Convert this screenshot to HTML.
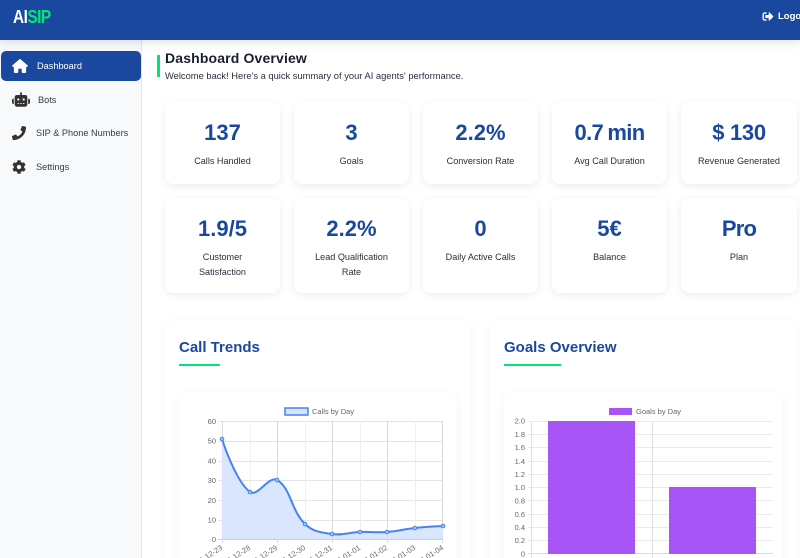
<!DOCTYPE html>
<html><head><meta charset="utf-8"><style>
html,body{margin:0;padding:0;width:800px;height:558px;overflow:hidden;background:#fff;font-family:"Liberation Sans",sans-serif}
*{box-sizing:border-box}
#root{position:relative;width:800px;height:558px;overflow:hidden;background:#fff}
.a{position:absolute}
#hd{left:0;top:0;width:800px;height:40px;background:#1a489f;box-shadow:0 2px 10px rgba(0,0,0,.12);z-index:5}
#sb{left:0;top:40px;width:142px;height:518px;background:#f8f9fb;border-right:1px solid #e5e7eb}
.nav{font-size:9.2px;color:#333b48;white-space:nowrap}
.card{background:#fff;border-radius:8px;box-shadow:0 2px 8px rgba(0,0,0,.08);text-align:center}
.v{position:absolute;left:0;right:0;top:18px;font-size:22px;line-height:26px;font-weight:bold;color:#1a489f}
.l{position:absolute;left:0;right:0;top:52px;font-size:9.1px;line-height:15px;color:#28303c;white-space:nowrap}
.big{background:#fff;border-radius:8px;box-shadow:0 2px 10px rgba(0,0,0,.05)}
.t{font-size:15px;font-weight:bold;color:#1a489f;white-space:nowrap}
.u{height:1.5px;width:41px;background:#00e676}
</style></head><body><div id="root">
<div class="a" id="hd">
<div class="a" style="left:13px;top:7px;font-size:18.5px;line-height:19px;font-weight:bold;letter-spacing:-.6px;color:#fff;transform:scaleX(.83);transform-origin:0 0;white-space:nowrap">AI<span style="color:#00e676">SIP</span></div>
<svg class="a" style="left:762px;top:11px" width="12" height="11" viewBox="0 0 512 512" fill="#fff"><path d="M497 273L329 441c-15 15-41 4.500-41-17v-96H152c-13.300 0-24-10.700-24-24v-96c0-13.300 10.700-24 24-24h136V88c0-21.400 25.900-32 41-17l168 168c9.300 9.400 9.300 24.600 0 34zM192 436v-40c0-6.600-5.400-12-12-12H96c-17.700 0-32-14.300-32-32V160c0-17.700 14.300-32 32-32h84c6.600 0 12-5.400 12-12V76c0-6.600-5.400-12-12-12H96c-53 0-96 43-96 96v192c0 53 43 96 96 96h84c6.600 0 12-5.400 12-12z"/></svg>
<div class="a" style="left:778px;top:11px;font-size:9.500px;line-height:12px;font-weight:bold;color:#fff;white-space:nowrap">Logout</div>
</div>
<div class="a" id="sb"></div>
<div class="a" style="left:1px;top:51px;width:140px;height:30px;background:#1a489f;border-radius:5px"></div>
<svg class="a" style="left:12px;top:59px" width="16" height="14" viewBox="0 0 576 512" fill="#fff"><path d="M575.800 255.500c0 18-15 32.100-32 32.100h-32l.7 160.200c0 2.700-.2 5.400-.5 8.100V472c0 22.100-17.900 40-40 40H456c-1.100 0-2.200 0-3.300-.1c-1.400 .1-2.800 .1-4.200 .1H416 392c-22.100 0-40-17.900-40-40V448 384c0-17.700-14.300-32-32-32H256c-17.700 0-32 14.300-32 32v64 24c0 22.100-17.900 40-40 40H160 128.100c-1.500 0-3-.1-4.500-.2c-1.200 .1-2.400 .2-3.600 .2H104c-22.100 0-40-17.900-40-40V360c0-.9 0-1.900 .1-2.800V287.600H32c-18 0-32-14-32-32.100c0-9 3-17 10-24L266.400 8c7-7 15-8 22-8s15 2 21 7L564.800 231.500c8 7 12 15 11 24z"/></svg>
<div class="a nav" style="left:37px;top:61px;color:#fff">Dashboard</div>
<svg class="a" style="left:12px;top:92px" width="18" height="15" viewBox="0 0 640 512" fill="#333"><path d="M320 0c17.700 0 32 14.300 32 32V96H472c39.800 0 72 32.200 72 72V440c0 39.800-32.200 72-72 72H168c-39.800 0-72-32.200-72-72V168c0-39.800 32.200-72 72-72H288V32c0-17.700 14.300-32 32-32zM208 384c-8.800 0-16 7.200-16 16s7.200 16 16 16h32c8.800 0 16-7.200 16-16s-7.200-16-16-16H208zm96 0c-8.800 0-16 7.200-16 16s7.200 16 16 16h32c8.800 0 16-7.200 16-16s-7.200-16-16-16H304zm96 0c-8.800 0-16 7.200-16 16s7.200 16 16 16h32c8.800 0 16-7.200 16-16s-7.200-16-16-16H400zM264 256a40 40 0 1 0 -80 0 40 40 0 1 0 80 0zm152 40a40 40 0 1 0 0-80 40 40 0 1 0 0 80zM48 224H64V416H48c-26.500 0-48-21.500-48-48V272c0-26.500 21.500-48 48-48zm544 0c26.500 0 48 21.500 48 48v96c0 26.500-21.500 48-48 48H576V224h16z"/></svg>
<div class="a nav" style="left:38px;top:95px">Bots</div>
<svg class="a" style="left:12px;top:126px" width="14" height="14" viewBox="0 0 512 512" fill="#333"><path d="M493.400 24.600l-104-24c-11.300-2.600-22.900 3.300-27.500 13.900l-48 112c-4.200 9.800-1.400 21.300 6.900 28l60.600 49.600c-36 76.700-98.900 140.500-177.200 177.200l-49.600-60.600c-6.800-8.300-18.200-11.100-28-6.900l-112 48C3.900 366.500-2 378.100.6 389.400l24 104C27.100 504.200 36.700 512 48 512c256.100 0 464-207.500 464-464 0-11.200-7.700-20.900-18.600-23.400z"/></svg>
<div class="a nav" style="left:36px;top:128px">SIP &amp; Phone Numbers</div>
<svg class="a" style="left:12px;top:160px" width="14" height="14" viewBox="0 0 512 512" fill="#333"><path d="M487.400 315.700l-42.600-24.600c4.300-23.200 4.300-47 0-70.200l42.600-24.600c4.900-2.800 7.100-8.600 5.500-14-11.100-35.600-30-67.800-54.700-94.600-3.800-4.100-10-5.100-14.800-2.300L380.800 110c-17.900-15.400-38.500-27.300-60.800-35.100V25.800c0-5.600-3.900-10.500-9.400-11.700-36.700-8.200-74.300-7.800-109.200 0-5.500 1.200-9.400 6.100-9.400 11.700V75c-22.200 7.900-42.800 19.800-60.800 35.100L88.700 85.500c-4.900-2.800-11-1.900-14.800 2.300-24.700 26.700-43.600 58.900-54.700 94.600-1.700 5.400.6 11.200 5.500 14L67.300 221c-4.300 23.200-4.300 47 0 70.200l-42.600 24.600c-4.900 2.800-7.100 8.600-5.500 14 11.100 35.600 30 67.800 54.700 94.600 3.800 4.100 10 5.100 14.800 2.300l42.600-24.600c17.900 15.400 38.500 27.300 60.800 35.100v49.200c0 5.600 3.900 10.500 9.400 11.700 36.700 8.200 74.300 7.800 109.200 0 5.500-1.200 9.400-6.100 9.400-11.700v-49.200c22.200-7.900 42.800-19.800 60.800-35.100l42.600 24.600c4.900 2.800 11 1.900 14.800-2.300 24.700-26.700 43.600-58.900 54.700-94.600 1.500-5.500-.7-11.300-5.600-14.100zM256 336c-44.100 0-80-35.900-80-80s35.900-80 80-80 80 35.900 80 80-35.900 80-80 80z"/></svg>
<div class="a nav" style="left:36px;top:162px">Settings</div>

<div class="a" style="left:157px;top:55px;width:3px;height:22px;background:#00e676"></div>
<div class="a" style="left:165px;top:50px;font-size:14px;line-height:17px;font-weight:bold;color:#181f2b;letter-spacing:.15px;white-space:nowrap">Dashboard Overview</div>
<div class="a" style="left:165px;top:70px;font-size:9.350px;line-height:12px;color:#28303c;white-space:nowrap">Welcome back! Here's a quick summary of your AI agents' performance.</div>

<div class="a card" style="left:165px;top:102px;width:115px;height:82px"><div class="v">137</div><div class="l">Calls Handled</div></div>
<div class="a card" style="left:294px;top:102px;width:115px;height:82px"><div class="v">3</div><div class="l">Goals</div></div>
<div class="a card" style="left:423px;top:102px;width:115px;height:82px"><div class="v">2.2%</div><div class="l">Conversion Rate</div></div>
<div class="a card" style="left:552px;top:102px;width:115px;height:82px"><div class="v" style="letter-spacing:-.7px;word-spacing:-1px">0.7 min</div><div class="l">Avg Call Duration</div></div>
<div class="a card" style="left:681px;top:102px;width:116px;height:82px"><div class="v" style="letter-spacing:-.3px">$ 130</div><div class="l">Revenue Generated</div></div>

<div class="a card" style="left:165px;top:198px;width:115px;height:95px"><div class="v">1.9/5</div><div class="l">Customer<br>Satisfaction</div></div>
<div class="a card" style="left:294px;top:198px;width:115px;height:95px"><div class="v">2.2%</div><div class="l">Lead Qualification<br>Rate</div></div>
<div class="a card" style="left:423px;top:198px;width:115px;height:95px"><div class="v">0</div><div class="l">Daily Active Calls</div></div>
<div class="a card" style="left:552px;top:198px;width:115px;height:95px"><div class="v">5€</div><div class="l">Balance</div></div>
<div class="a card" style="left:681px;top:198px;width:116px;height:95px"><div class="v" style="letter-spacing:-.8px">Pro</div><div class="l">Plan</div></div>

<div class="a big" style="left:165px;top:321px;width:306px;height:260px"></div>
<div class="a big" style="left:490px;top:321px;width:307px;height:260px"></div>
<div class="a t" style="left:179px;top:339px">Call Trends</div>
<div class="a u" style="left:179px;top:364px"></div>
<div class="a t" style="left:504px;top:339px">Goals Overview</div>
<div class="a u" style="left:504px;top:364px;width:57px"></div>
<div class="a big" style="left:179px;top:393px;width:278px;height:190px"></div>
<div class="a big" style="left:504px;top:393px;width:279px;height:190px"></div>

<svg class="a" style="left:0;top:0" width="800" height="558" viewBox="0 0 800 558" font-family="Liberation Sans, sans-serif" font-size="7.500" fill="#666">
<g stroke="#e4e4e4" stroke-width="1" fill="none">
<path d="M218 421.500H443M218 441.500H443M218 461.500H443M218 480.500H443M218 500.500H443M218 520.500H443"/>
<path d="M250.500 421V539M305.500 421V539M360.500 421V539M415.500 421V539" stroke="#efefef"/>
<path d="M222.500 421V543M277.500 421V543M332.500 421V543M387.500 421V543M442.500 421V543" stroke="#d9d9d9"/>
<path d="M218 539.500H443" stroke="#cfcfcf"/>
</g>
<path d="M222 439C222 439 235.300 481 250 492C257.300 497.400 269.100 475.400 277 480C291.100 488.200 290.800 510.100 305 524C312.800 531.700 320.900 532.400 332 534C342.900 535.600 348.800 532.400 360 532C370.800 531.600 376.300 532.800 387 532C398.300 531.200 403.800 529.200 415 528C426.200 526.800 443 526 443 526V539H222Z" fill="#d6e3fd" fill-opacity=".9"/>
<path d="M222 439C222 439 235.300 481 250 492C257.300 497.400 269.100 475.400 277 480C291.100 488.200 290.800 510.100 305 524C312.800 531.700 320.900 532.400 332 534C342.900 535.600 348.800 532.400 360 532C370.800 531.600 376.300 532.800 387 532C398.300 531.200 403.800 529.200 415 528C426.200 526.800 443 526 443 526" fill="none" stroke="#4682f4" stroke-width="2"/>
<g fill="#a9c5fa" stroke="#4682f4" stroke-width="1">
<circle cx="222" cy="439" r="1.800"/><circle cx="250" cy="492" r="1.800"/><circle cx="277" cy="480" r="1.800"/><circle cx="305" cy="524" r="1.800"/><circle cx="332" cy="534" r="1.800"/><circle cx="360" cy="532" r="1.800"/><circle cx="387" cy="532" r="1.800"/><circle cx="415" cy="528" r="1.800"/><circle cx="443" cy="526" r="1.800"/>
</g>
<g text-anchor="end">
<text x="216" y="424">60</text><text x="216" y="443.500">50</text><text x="216" y="463.500">40</text><text x="216" y="483">30</text><text x="216" y="503">20</text><text x="216" y="522.500">10</text><text x="216" y="542">0</text>
<text transform="translate(223 549) rotate(-33)">2025-12-23</text>
<text transform="translate(251 549) rotate(-33)">2025-12-28</text>
<text transform="translate(278 549) rotate(-33)">2025-12-29</text>
<text transform="translate(306 549) rotate(-33)">2025-12-30</text>
<text transform="translate(333 549) rotate(-33)">2025-12-31</text>
<text transform="translate(361 549) rotate(-33)">2026-01-01</text>
<text transform="translate(388 549) rotate(-33)">2026-01-02</text>
<text transform="translate(416 549) rotate(-33)">2026-01-03</text>
<text transform="translate(444 549) rotate(-33)">2026-01-04</text>
</g>
<rect x="285" y="408" width="23" height="7" fill="#d6e3fd" stroke="#4682f4" stroke-width="1.500"/>
<text x="312" y="414">Calls by Day</text>

<g stroke="#ebebeb" fill="none">
<path d="M528 421.500H773M528 434.500H773M528 447.500H773M528 461.500H773M528 474.500H773M528 487.500H773M528 500.500H773M528 514.500H773M528 527.500H773M528 540.500H773"/>
<path d="M528 553.500H773" stroke="#ddd"/>
<path d="M531.500 421V558M652.500 421V558" stroke="#e0e0e0"/>
</g>
<rect x="548" y="421" width="87" height="133" fill="#a855f7"/>
<rect x="669" y="487" width="87" height="67" fill="#a855f7"/>
<g text-anchor="end">
<text x="525" y="423.500">2.0</text><text x="525" y="437">1.8</text><text x="525" y="450">1.6</text><text x="525" y="464">1.4</text><text x="525" y="477">1.2</text><text x="525" y="490">1.0</text><text x="525" y="503.500">0.8</text><text x="525" y="517">0.6</text><text x="525" y="530">0.4</text><text x="525" y="543">0.2</text><text x="525" y="556.500">0</text>
</g>
<rect x="609" y="408" width="23" height="7" fill="#a855f7"/>
<text x="636" y="414">Goals by Day</text>
</svg>
</div></body></html>
